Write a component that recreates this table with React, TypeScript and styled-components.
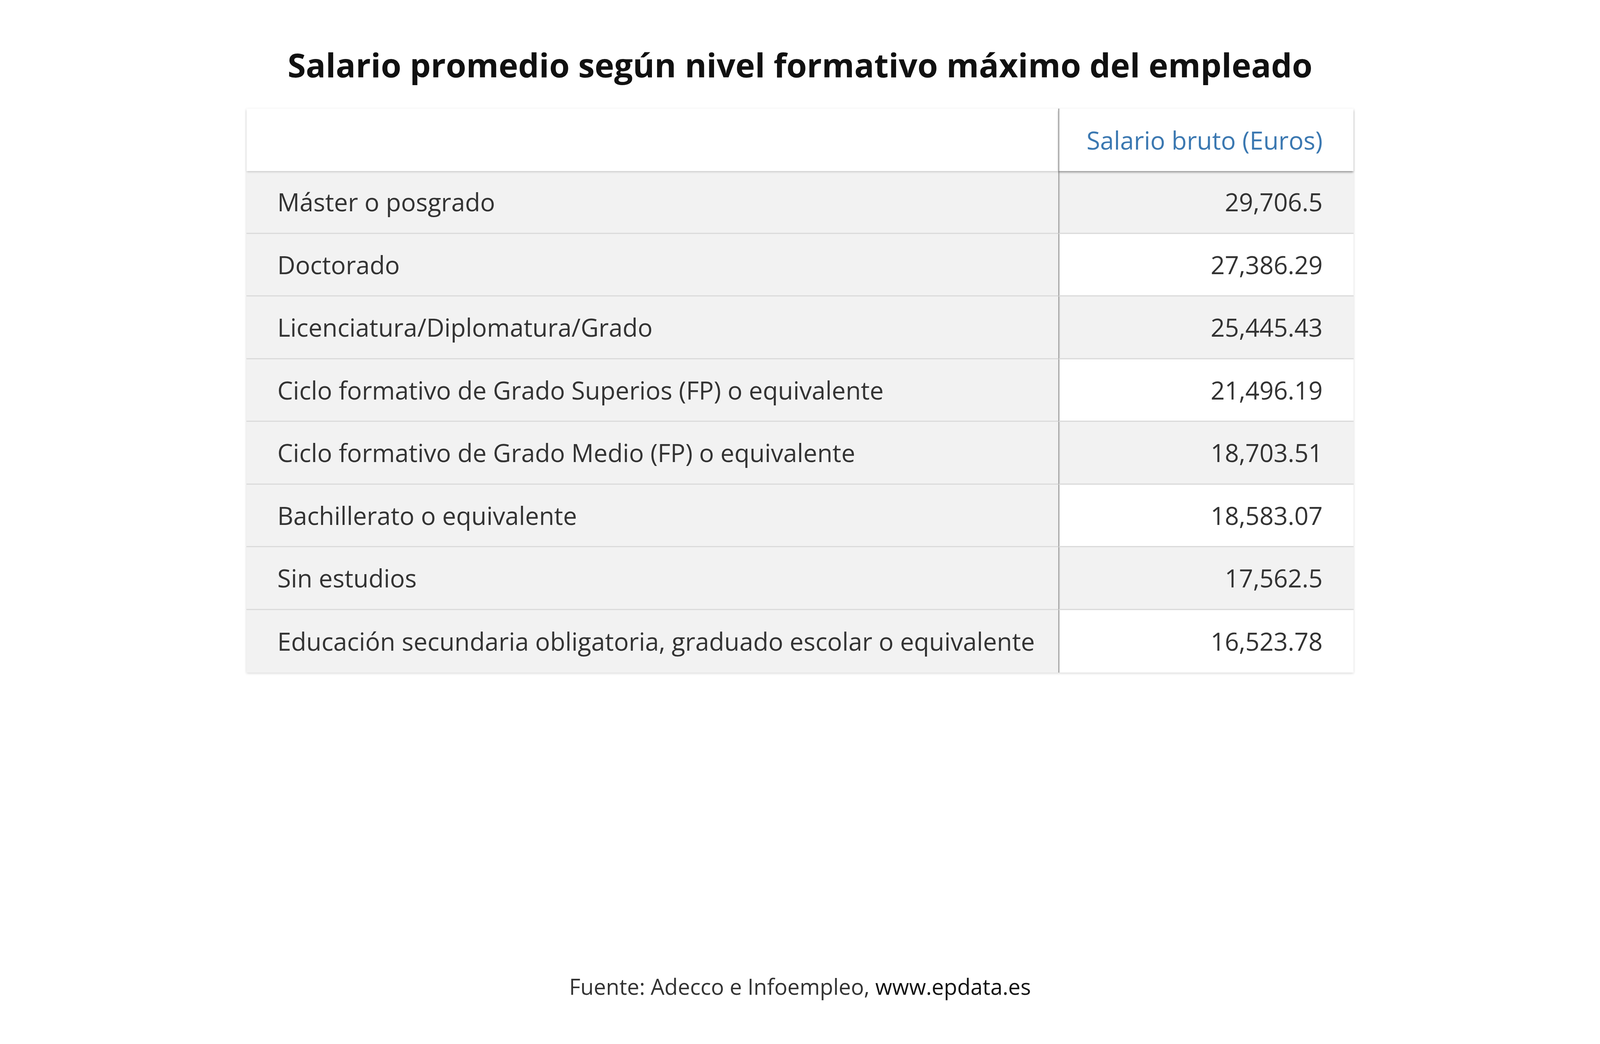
import React from "react";
import styled, { createGlobalStyle } from "styled-components";

// measures come from a 4552 x 2673 frame: x sizes follow the viewport width,
// y sizes follow the viewport height
const ux = (n: number) => `calc(${n} * 100vw / 4552)`;
const uy = (n: number) => `calc(${n} * 100vh / 2673)`;

const GlobalStyle = createGlobalStyle`
  html, body {
    margin: 0;
    padding: 0;
    background: #ffffff;
    overflow: hidden;
  }
  body {
    font-family: "Open Sans", "Noto Sans", "DejaVu Sans", sans-serif;
  }
`;

const Page = styled.main`
  height: 100vh;
  box-sizing: border-box;
  display: flex;
  flex-direction: column;
  align-items: center;
  overflow: hidden;
`;

const Title = styled.h1`
  margin: ${uy(111)} 0 0 0;
  font-size: ${ux(94)};
  line-height: ${uy(110)};
  font-weight: 700;
  color: #111111;
  text-align: center;
  white-space: nowrap;
`;

const Table = styled.div`
  margin-top: ${uy(57)};
  width: ${ux(3150)};
  display: grid;
  grid-template-columns: ${ux(2310)} ${ux(840)};
  box-shadow: 0 ${uy(2)} ${ux(7)} rgba(0, 0, 0, 0.16);
`;

const HeadCell = styled.div<{ $divider?: boolean }>`
  height: ${uy(160)};
  box-sizing: border-box;
  display: flex;
  align-items: center;
  justify-content: flex-end;
  padding: 0 ${ux(88)} 0 ${ux(20)};
  background: #ffffff;
  color: #3b78b1;
  font-size: ${ux(70.5)};
  white-space: nowrap;
  position: relative;
  z-index: 2;
  box-shadow: ${(p) =>
    p.$divider
      ? `0 ${uy(4)} ${uy(5)} ${uy(-1)} rgba(0, 0, 0, 0.42)`
      : `0 ${uy(3)} ${uy(5)} ${uy(-1)} rgba(0, 0, 0, 0.2)`};
  border-left: ${(p) => (p.$divider ? `${ux(4)} solid #a9a9a9` : "none")};
`;

const Cell = styled.div<{ $shade: boolean; $num?: boolean; $last?: boolean }>`
  height: ${uy(160.5)};
  box-sizing: border-box;
  display: flex;
  align-items: center;
  justify-content: ${(p) => (p.$num ? "flex-end" : "flex-start")};
  padding: ${(p) => (p.$num ? `0 ${ux(88)} 0 ${ux(20)}` : `0 ${ux(88)}`)};
  background: ${(p) => (p.$shade ? "#f2f2f2" : "#ffffff")};
  color: #333333;
  font-size: ${ux(70.5)};
  white-space: nowrap;
  position: relative;
  border-bottom: ${(p) => (p.$last ? "none" : `${uy(3)} solid #dbdbdb`)};
  border-left: ${(p) => (p.$num ? `${ux(4)} solid #a9a9a9` : "none")};
  box-shadow: ${(p) =>
    p.$num ? `inset ${ux(3)} 0 ${ux(3)} ${ux(-1)} rgba(0, 0, 0, 0.08)` : "none"};
`;

const Footer = styled.footer`
  margin-top: auto;
  margin-bottom: ${uy(110)};
  font-size: ${ux(62)};
  color: #333333;
  text-align: center;
  white-space: nowrap;
`;

const Site = styled.span`
  color: #111111;
`;

const rows: [string, string][] = [
  ["Máster o posgrado", "29,706.5"],
  ["Doctorado", "27,386.29"],
  ["Licenciatura/Diplomatura/Grado", "25,445.43"],
  ["Ciclo formativo de Grado Superios (FP) o equivalente", "21,496.19"],
  ["Ciclo formativo de Grado Medio (FP) o equivalente", "18,703.51"],
  ["Bachillerato o equivalente", "18,583.07"],
  ["Sin estudios", "17,562.5"],
  ["Educación secundaria obligatoria, graduado escolar o equivalente", "16,523.78"],
];

const App: React.FC = () => {
  return (
    <>
      <GlobalStyle />
      <Page>
        <Title>Salario promedio según nivel formativo máximo del empleado</Title>
        <Table>
          <HeadCell />
          <HeadCell $divider>Salario bruto (Euros)</HeadCell>
          {rows.map(([label, value], i) => (
            <React.Fragment key={label}>
              <Cell $shade $last={i === rows.length - 1}>
                {label}
              </Cell>
              <Cell $shade={i % 2 === 0} $num $last={i === rows.length - 1}>
                {value}
              </Cell>
            </React.Fragment>
          ))}
        </Table>
        <Footer>
          Fuente: Adecco e Infoempleo, <Site>www.epdata.es</Site>
        </Footer>
      </Page>
    </>
  );
};

export default App;
